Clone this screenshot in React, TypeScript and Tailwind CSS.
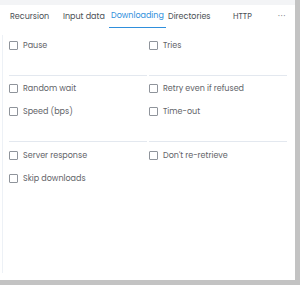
import React from "react";

const font = { fontFamily: "Poppins, Lato, 'Noto Sans', sans-serif" };

function Check({ label }: { label: string }) {
  return (
    <div className="flex items-center h-[23px]">
      <span className="w-[9px] h-[9px] border border-[#8f949b] rounded-[1px] bg-white shrink-0" />
      <span className="ml-[5px] text-[8px] text-[#5f6368] leading-none">{label}</span>
    </div>
  );
}

export default function App() {
  const tabs = [
    { t: "Recursion", w: "w-[53px]" },
    { t: "Input data", w: "w-[47px]" },
    { t: "Downloading", w: "w-[58px]", active: true },
    { t: "Directories", w: "w-[65px]" },
    { t: "HTTP", w: "w-[45px]" },
  ];
  return (
    <div className="w-[300px] h-[285px] bg-[#c3c3c3] overflow-hidden" style={font}>
      <div className="w-[295px] h-[280px] bg-white flex flex-col relative">
        <div className="h-[5px] bg-[#f3f4f6] shrink-0" />
        <div className="absolute left-[2px] top-[35px] w-[1px] h-[238px] bg-[#edf1f6]" />
        <div className="flex items-end h-[23px] pl-[10px] text-[8px] text-[#4a4f55]">
          {tabs.map((tb) => (
            <div key={tb.t} className={`${tb.w} h-full flex items-center`}>
              {tb.active ? (
                <span className="h-full flex items-center -ml-[1px] px-[2px] text-[#2f8fdc] border-b border-[#2f8fdc]">
                  {tb.t}
                </span>
              ) : (
                <span>{tb.t}</span>
              )}
            </div>
          ))}
          <div className="h-full flex items-center text-[#6b7078] tracking-[1px]">···</div>
        </div>
        <div className="pl-[9px] pr-[8px] pt-[6px]">
          <div className="grid grid-cols-2 gap-x-[2px]">
            <Check label="Pause" />
            <Check label="Tries" />
          </div>
          <div className="grid grid-cols-2 gap-x-[2px] mt-[18px]">
            <div className="h-px bg-[#e3e8ef]" />
            <div className="h-px bg-[#e3e8ef]" />
          </div>
          <div className="grid grid-cols-2 gap-x-[2px] mt-[1px]">
            <Check label="Random wait" />
            <Check label="Retry even if refused" />
            <Check label="Speed (bps)" />
            <Check label="Time-out" />
          </div>
          <div className="grid grid-cols-2 gap-x-[2px] mt-[18px]">
            <div className="h-px bg-[#e3e8ef]" />
            <div className="h-px bg-[#e3e8ef]" />
          </div>
          <div className="grid grid-cols-2 gap-x-[2px] mt-[2px]">
            <Check label="Server response" />
            <Check label="Don't re-retrieve" />
            <Check label="Skip downloads" />
          </div>
        </div>
      </div>
    </div>
  );
}
